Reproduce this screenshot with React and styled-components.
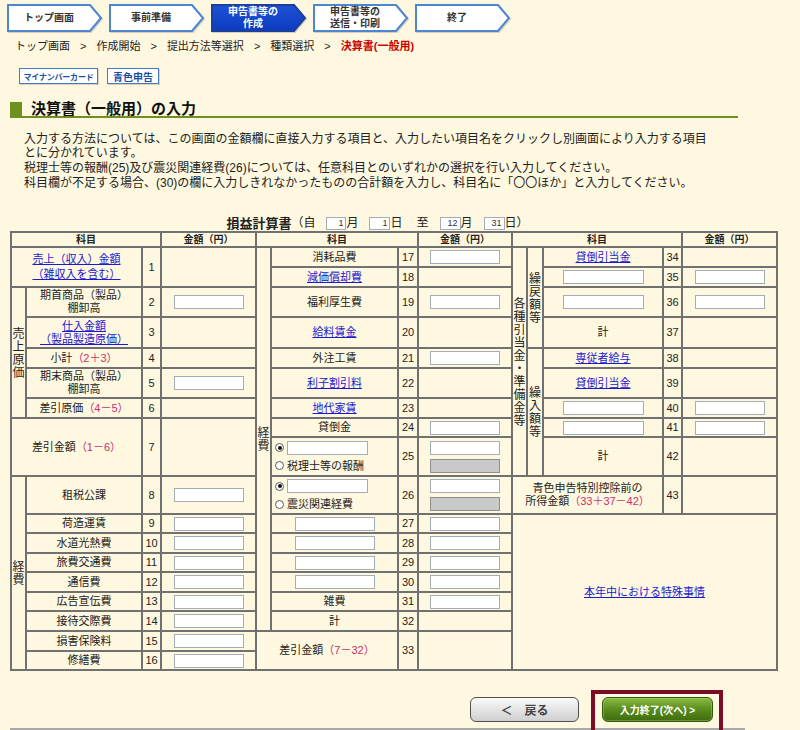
import React from 'react';
import styled, { createGlobalStyle } from 'styled-components';

const FONT = `"Liberation Sans", "Noto Sans CJK JP", sans-serif`;
const CJK = `"Noto Sans CJK JP", sans-serif`;
const BG = '#FFF8E0';

const Global = createGlobalStyle`
  html, body { margin: 0; padding: 0; background: ${BG}; }
  body { font-family: ${FONT}; color: #222; }
  * { box-sizing: border-box; }
`;

const Page = styled.div`
  width: 800px;
  height: 730px;
  overflow: hidden;
  padding-top: 4px;
`;

/* ---------- step bar ---------- */
const StepBar = styled.div`
  display: flex;
  gap: 5px;
  padding-left: 7px;
  height: 28px;
`;
const StepItem = styled.div`
  position: relative;
  flex: none;
  width: 97px;
  height: 28px;
`;
const StepShape = styled.svg`
  position: absolute;
  left: 0;
  top: 0;
  width: 97px;
  height: 28px;
  overflow: visible;
  filter: drop-shadow(1px 1px 0 rgba(90, 90, 90, 0.25));
`;
const StepLabel = styled.div`
  position: relative;
  width: 84px;
  height: 28px;
  display: flex;
  flex-direction: column;
  align-items: center;
  justify-content: center;
  text-align: center;
  font-size: 10px;
  line-height: 12px;
  font-weight: bold;
  color: ${p => (p.$active ? '#fff' : '#333')};
`;

const STEPS = [
  { lines: ['トップ画面'] },
  { lines: ['事前準備'] },
  { lines: ['申告書等の', '作成'], active: true },
  { lines: ['申告書等の', '送信・印刷'] },
  { lines: ['終了'] },
];

function Step({ lines, active, idx }) {
  const gid = `stepfill${idx}`;
  return (
    <StepItem>
      <StepShape viewBox="0 0 97 28">
        {active && (
          <defs>
            <linearGradient id={gid} x1="0" y1="0" x2="0" y2="1">
              <stop offset="0" stopColor="#1d52d8" />
              <stop offset="1" stopColor="#0c3bbd" />
            </linearGradient>
          </defs>
        )}
        <polygon
          points="1,1 83,1 94,14 83,27 1,27"
          fill={active ? `url(#${gid})` : '#fff'}
          stroke={active ? '#1c3f9c' : '#4c86d2'}
          strokeWidth="2"
        />
      </StepShape>
      <StepLabel $active={active}>
        {lines.map(l => (
          <span key={l}>{l}</span>
        ))}
      </StepLabel>
    </StepItem>
  );
}

/* ---------- breadcrumb ---------- */
const Crumbs = styled.div`
  margin-top: 7px;
  padding-left: 15px;
  display: flex;
  align-items: center;
  font-size: 11px;
  line-height: 14px;
  color: #222;
`;
const Sep = styled.span`
  margin: 0 10px;
`;
const Current = styled.span`
  color: #cc0000;
  font-weight: bold;
`;

/* ---------- main ---------- */
const Main = styled.div`
  padding-left: 10px;
`;
const Badges = styled.div`
  display: flex;
  gap: 9px;
  margin-top: 15px;
  padding-left: 9px;
`;
const Badge = styled.span`
  width: ${p => p.$w}px;
  height: 16px;
  border: 1px solid #4a78c4;
  box-shadow: 1px 1px 0 rgba(0, 0, 0, 0.15);
  background: #fff;
  color: #1d4ea6;
  font-weight: bold;
  font-size: ${p => p.$fs}px;
  letter-spacing: ${p => p.$ls || 0}px;
  display: flex;
  align-items: center;
  justify-content: center;
  white-space: nowrap;
`;
const Heading = styled.h1`
  margin: 18px 0 0 0;
  width: 728px;
  height: 16px;
  display: flex;
  align-items: flex-end;
  border-bottom: 2px solid #6f8f1f;
  font-size: 15px;
  line-height: 15px;
  font-weight: bold;
  color: #111;
`;
const HeadMark = styled.span`
  flex: none;
  width: 12px;
  height: 14px;
  background: #6f8f1f;
  margin-right: 9px;
`;
const Intro = styled.div`
  margin: 14px 0 0 14px;
  font-size: 12px;
  line-height: 14px;
  color: #222;
`;
const IntroPara = styled.p`
  margin: ${p => (p.$first ? 0 : '1px')} 0 0;
`;

const StatementTitle = styled.div`
  width: 735px;
  height: 16px;
  margin-top: 25px;
  display: flex;
  justify-content: center;
  align-items: center;
  font-size: 12px;
  line-height: 15px;
  white-space: nowrap;
`;
const TitleName = styled.b`
  font-size: 13px;
`;
const DateBox = styled.input.attrs({ type: 'text', readOnly: true })`
  width: ${p => p.$w || 20}px;
  height: 13px;
  margin: 0 0 0 11px;
  padding: 0 2px;
  border: 1px solid #a3adb8;
  background: #fff;
  font: 9px ${FONT};
  text-align: right;
  color: #333;
  outline: none;
`;
const Between = styled.span`
  margin-left: 14px;
`;

/* ---------- table ---------- */
const Sheet = styled.div`
  display: grid;
  width: max-content;
  grid-template-columns: 13px 114px 17px 93px 13px 125px 18px 92px 13px 14px 118px 17px 93px;
  grid-template-rows: 13px 18px 18px 28px 29px 18px 28px 18px 17px 37px 36px 17px 18px 17px 18px 17px 18px 18px 17px;
  gap: 2px;
  padding: 2px;
  background: #717171;
  font-size: 11px;
  line-height: 13px;
  color: #222;
`;
const Box = styled.div`
  grid-column: ${p => p.$c};
  grid-row: ${p => p.$r};
  background: ${BG};
  display: flex;
  flex-direction: column;
  align-items: ${p => (p.$start ? 'flex-start' : 'center')};
  justify-content: center;
  text-align: center;
  line-height: ${p => p.$lh || 13}px;
  padding-left: ${p => (p.$start ? 3 : 0)}px;
  gap: ${p => p.$gap || 0}px;
  min-width: 0;
  white-space: nowrap;
`;
const Head = styled(Box)`
  font-size: 10px;
  font-weight: bold;
`;
const Num = styled(Box)`
  font-size: 11px;
`;
const SideText = styled.span`
  writing-mode: vertical-rl;
  text-orientation: upright;
  font-family: ${CJK};
  font-size: 12px;
  line-height: 13px;
  letter-spacing: 1px;
`;
const Anchor = styled.a`
  color: #1a1ad2;
  text-decoration: underline;
  cursor: pointer;
`;
const Formula = styled.span`
  color: #c8306f;
`;
const Field = styled.input.attrs({ type: 'text' })`
  width: ${p => p.$w || 70}px;
  height: 14px;
  margin: 0;
  padding: 0 2px;
  border: 1px solid ${p => (p.$gray ? '#8e8e8e' : '#a3adb8')};
  background: ${p => (p.$gray ? '#c9c9c9' : '#fff')};
  font: 10px ${FONT};
  text-align: right;
  outline: none;
  flex: none;
`;
const Radio = styled.span`
  flex: none;
  width: 9px;
  height: 9px;
  border-radius: 50%;
  border: 1px solid #5a5a5a;
  background: #fff;
  display: inline-flex;
  align-items: center;
  justify-content: center;
  &::after {
    content: '';
    width: 4px;
    height: 4px;
    border-radius: 50%;
    background: ${p => (p.$on ? '#111' : 'transparent')};
  }
`;
const ChoiceLine = styled.div`
  display: flex;
  align-items: center;
  gap: 3px;
  line-height: 14px;
`;

const Side = ({ c, r, children }) => (
  <Box $c={c} $r={r}>
    <SideText>{children}</SideText>
  </Box>
);

const Row = ({ r, label, no, input, labelCol = 2, noCol = 3, amtCol = 4 }) => (
  <>
    <Box $c={labelCol} $r={r}>{label}</Box>
    <Num $c={noCol} $r={r}>{no}</Num>
    <Box $c={amtCol} $r={r}>{input ? <Field /> : null}</Box>
  </>
);

const Choice = ({ r, no, text }) => (
  <>
    <Box $c={6} $r={r} $start $gap={4}>
      <ChoiceLine>
        <Radio $on />
        <Field $w={81} />
      </ChoiceLine>
      <ChoiceLine>
        <Radio />
        <span>{text}</span>
      </ChoiceLine>
    </Box>
    <Num $c={7} $r={r}>{no}</Num>
    <Box $c={8} $r={r} $gap={4}>
      <Field />
      <Field $gray />
    </Box>
  </>
);

const MID = { labelCol: 6, noCol: 7, amtCol: 8 };
const RIGHT = { labelCol: 11, noCol: 12, amtCol: 13 };

function Statement() {
  const leftExpenses = ['荷造運賃', '水道光熱費', '旅費交通費', '通信費', '広告宣伝費', '接待交際費', '損害保険料', '修繕費'];
  return (
    <Sheet>
      {/* headers */}
      <Head $c="1 / 4" $r={1}>科目</Head>
      <Head $c={4} $r={1}>金額（円）</Head>
      <Head $c="5 / 8" $r={1}>科目</Head>
      <Head $c={8} $r={1}>金額（円）</Head>
      <Head $c="9 / 13" $r={1}>科目</Head>
      <Head $c={13} $r={1}>金額（円）</Head>

      {/* left section */}
      <Box $c="1 / 3" $r="2 / 4" $lh={15}>
        <Anchor href="#">売上（収入）金額<br />（雑収入を含む）</Anchor>
      </Box>
      <Num $c={3} $r="2 / 4">1</Num>
      <Box $c={4} $r="2 / 4" />
      <Side c={1} r="4 / 9">売上原価</Side>
      <Row r={4} no={2} input label={<span>期首商品（製品）<br />棚卸高</span>} />
      <Row r={5} no={3} label={<Anchor href="#">仕入金額<br />（製品製造原価）</Anchor>} />
      <Row r={6} no={4} label={<span>小計<Formula>（2＋3）</Formula></span>} />
      <Row r={7} no={5} input label={<span>期末商品（製品）<br />棚卸高</span>} />
      <Row r={8} no={6} label={<span>差引原価<Formula>（4－5）</Formula></span>} />
      <Box $c="1 / 3" $r="9 / 11">
        <span>差引金額<Formula>（1－6）</Formula></span>
      </Box>
      <Num $c={3} $r="9 / 11">7</Num>
      <Box $c={4} $r="9 / 11" />
      <Side c={1} r="11 / 20">経費</Side>
      <Row r={11} no={8} input label="租税公課" />
      {leftExpenses.map((l, i) => (
        <Row key={l} r={12 + i} no={9 + i} input label={l} />
      ))}

      {/* middle section */}
      <Side c={5} r="2 / 18">経費</Side>
      <Row r={2} no={17} input label="消耗品費" {...MID} />
      <Row r={3} no={18} label={<Anchor href="#">減価償却費</Anchor>} {...MID} />
      <Row r={4} no={19} input label="福利厚生費" {...MID} />
      <Row r={5} no={20} label={<Anchor href="#">給料賃金</Anchor>} {...MID} />
      <Row r={6} no={21} input label="外注工賃" {...MID} />
      <Row r={7} no={22} label={<Anchor href="#">利子割引料</Anchor>} {...MID} />
      <Row r={8} no={23} label={<Anchor href="#">地代家賃</Anchor>} {...MID} />
      <Row r={9} no={24} input label="貸倒金" {...MID} />
      <Choice r={10} no={25} text="税理士等の報酬" />
      <Choice r={11} no={26} text="震災関連経費" />
      {[27, 28, 29, 30].map((n, i) => (
        <Row key={n} r={12 + i} no={n} input label={<Field $w={80} />} {...MID} />
      ))}
      <Row r={16} no={31} input label="雑費" {...MID} />
      <Row r={17} no={32} label="計" {...MID} />
      <Box $c="5 / 7" $r="18 / 20">
        <span>差引金額<Formula>（7－32）</Formula></span>
      </Box>
      <Num $c={7} $r="18 / 20">33</Num>
      <Box $c={8} $r="18 / 20" />

      {/* right section */}
      <Side c={9} r="2 / 11">各種引当金・準備金等</Side>
      <Side c={10} r="2 / 6">繰戻額等</Side>
      <Row r={2} no={34} label={<Anchor href="#">貸倒引当金</Anchor>} {...RIGHT} />
      <Row r={3} no={35} input label={<Field $w={81} />} {...RIGHT} />
      <Row r={4} no={36} input label={<Field $w={81} />} {...RIGHT} />
      <Row r={5} no={37} label="計" {...RIGHT} />
      <Side c={10} r="6 / 11">繰入額等</Side>
      <Row r={6} no={38} label={<Anchor href="#">専従者給与</Anchor>} {...RIGHT} />
      <Row r={7} no={39} label={<Anchor href="#">貸倒引当金</Anchor>} {...RIGHT} />
      <Row r={8} no={40} input label={<Field $w={81} />} {...RIGHT} />
      <Row r={9} no={41} input label={<Field $w={81} />} {...RIGHT} />
      <Row r={10} no={42} label="計" {...RIGHT} />
      <Row
        r={11}
        no={43}
        labelCol="9 / 12"
        noCol={12}
        amtCol={13}
        label={<span>青色申告特別控除前の<br />所得金額<Formula>（33＋37－42）</Formula></span>}
      />
      <Box $c="9 / 14" $r="12 / 20">
        <Anchor href="#">本年中における特殊事情</Anchor>
      </Box>
    </Sheet>
  );
}

/* ---------- buttons ---------- */
const ButtonRow = styled.div`
  width: 735px;
  height: 40px;
  margin-top: 19px;
  padding-right: 22px;
  border-bottom: 2px solid #a9a9a9;
  display: flex;
  align-items: flex-start;
  justify-content: flex-end;
`;
const BackButton = styled.button`
  width: 109px;
  height: 25px;
  margin: 7px 12px 0 0;
  border: 1px solid #4f4f4f;
  border-radius: 6px;
  background: linear-gradient(#fbfbfb, #e2e2e2 55%, #cfcfcf);
  color: #444;
  font: bold 12px ${FONT};
  padding: 0;
  cursor: pointer;
`;
const NextFrame = styled.div`
  flex: none;
  height: 44px;
  border: 4px solid #7c0b24;
  padding: 3px 6px 0 7px;
`;
const NextButton = styled.button`
  width: 111px;
  height: 25px;
  border: 1px solid #2f5a0c;
  border-radius: 6px;
  background: linear-gradient(#8bbb45, #5a8c1e 50%, #3d6d0c);
  box-shadow: inset 0 0 0 1px rgba(190, 230, 120, 0.35);
  color: #fff;
  font: bold 10px ${FONT};
  padding: 0;
  cursor: pointer;
`;

export default function App() {
  return (
    <Page>
      <Global />
      <StepBar>
        {STEPS.map((s, i) => (
          <Step key={i} idx={i} lines={s.lines} active={s.active} />
        ))}
      </StepBar>
      <Crumbs>
        <span>トップ画面</span>
        <Sep>&gt;</Sep>
        <span>作成開始</span>
        <Sep>&gt;</Sep>
        <span>提出方法等選択</span>
        <Sep>&gt;</Sep>
        <span>種類選択</span>
        <Sep>&gt;</Sep>
        <Current>決算書(一般用)</Current>
      </Crumbs>
      <Main>
        <Badges>
          <Badge $w={79} $fs={8} $ls={-0.2}>マイナンバーカード</Badge>
          <Badge $w={52} $fs={10}>青色申告</Badge>
        </Badges>
        <Heading>
          <HeadMark />
          <span>決算書（一般用）の入力</span>
        </Heading>
        <Intro>
          <IntroPara $first>
            入力する方法については、この画面の金額欄に直接入力する項目と、入力したい項目名をクリックし別画面により入力する項目
            <br />
            とに分かれています。
          </IntroPara>
          <IntroPara>税理士等の報酬(25)及び震災関連経費(26)については、任意科目とのいずれかの選択を行い入力してください。</IntroPara>
          <IntroPara>科目欄が不足する場合、(30)の欄に入力しきれなかったものの合計額を入力し、科目名に「〇〇ほか」と入力してください。</IntroPara>
        </Intro>
        <StatementTitle>
          <TitleName>損益計算書</TitleName>
          <span>（自</span>
          <DateBox defaultValue="1" />
          <span>月</span>
          <DateBox $w={21} defaultValue="1" />
          <span>日</span>
          <Between>至</Between>
          <DateBox $w={21} defaultValue="12" />
          <span>月</span>
          <DateBox $w={21} defaultValue="31" />
          <span>日）</span>
        </StatementTitle>
        <Statement />
        <ButtonRow>
          <BackButton>＜　戻る</BackButton>
          <NextFrame>
            <NextButton>入力終了(次へ)&nbsp;&gt;</NextButton>
          </NextFrame>
        </ButtonRow>
      </Main>
    </Page>
  );
}
